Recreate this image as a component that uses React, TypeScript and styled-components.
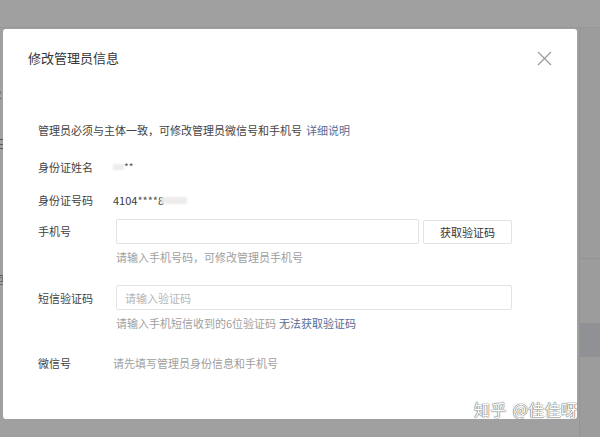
import React from "react";
import styled, { createGlobalStyle } from "styled-components";

const Global = createGlobalStyle`
  html, body { margin: 0; padding: 0; }
  body {
    width: 600px;
    height: 437px;
    overflow: hidden;
    background: #a0a0a0;
    font-family: "Noto Sans CJK SC", "Microsoft YaHei", "Noto Sans", sans-serif;
  }
`;

const Stage = styled.div`
  position: relative;
  width: 600px;
  height: 437px;
  overflow: hidden;
  background: #a0a0a0;
`;

/* ---------- dimmed page behind the dialog ---------- */
const Page = styled.div`
  display: flex;
  flex-direction: column;
  height: 100%;
`;

const TopBar = styled.div`
  height: 27px;
  border-bottom: 1px solid #979797;
  flex-shrink: 0;
`;

const PageBody = styled.div`
  flex: 1;
  display: flex;
`;

const LeftRail = styled.div`
  width: 10px;
  display: flex;
  flex-direction: column;
  color: #3c3c3c;
  font-size: 12px;
  line-height: 14px;
  margin-left: -5px;
`;

const RailGlyph = styled.span<{ $mt: number }>`
  margin-top: ${(p) => p.$mt}px;
  opacity: 0.7;
`;

const PageMain = styled.div`
  flex: 1;
`;

const SidePanel = styled.div`
  width: 20px;
  border-left: 1px solid #959595;
  background: #9c9c9c;
  display: flex;
  flex-direction: column;
`;

const SideRow = styled.div<{ $h: number; $dark?: boolean; $line?: boolean }>`
  height: ${(p) => p.$h}px;
  flex-shrink: 0;
  background: ${(p) => (p.$dark ? "#8f9194" : "transparent")};
  border-bottom: ${(p) => (p.$line ? "1px solid #939393" : "none")};
`;

/* ---------- dialog ---------- */
const Dialog = styled.div`
  position: absolute;
  left: 3px;
  top: 29px;
  width: 574px;
  height: 390px;
  background: #fff;
  border-radius: 3px;
  box-sizing: border-box;
  display: flex;
  flex-direction: column;
`;

const Header = styled.div`
  height: 58px;
  padding: 20px 0 0 25px;
  box-sizing: border-box;
  display: flex;
  align-items: flex-start;
  justify-content: space-between;
`;

const Title = styled.h3`
  margin: 0;
  font-size: 13px;
  line-height: 18px;
  font-weight: 400;
  color: #353535;
`;

const CloseButton = styled.button`
  width: 16px;
  height: 16px;
  margin: 1px 25px 0 0;
  padding: 0;
  border: 0;
  background: transparent;
  display: flex;
  align-items: center;
  justify-content: center;
`;

const Body = styled.div`
  padding: 0 0 0 35px;
  display: flex;
  flex-direction: column;
`;

const Notice = styled.p`
  margin: 35px 0 0;
  font-size: 11px;
  line-height: 16px;
  color: #444;
`;

const Link = styled.a`
  color: #576b95;
  text-decoration: none;
  margin-left: 4px;
`;

const Field = styled.div<{ $mt: number }>`
  margin-top: ${(p) => p.$mt}px;
  display: flex;
  align-items: flex-start;
`;

const Label = styled.label<{ $pt?: number }>`
  width: 78px;
  flex-shrink: 0;
  padding-top: ${(p) => p.$pt ?? 0}px;
  font-size: 11px;
  line-height: 16px;
  color: #3f3f3f;
`;

const Control = styled.div`
  display: flex;
  flex-direction: column;
`;

const Value = styled.div<{ $muted?: boolean }>`
  font-size: 11px;
  line-height: 16px;
  color: ${(p) => (p.$muted ? "#a0a0a0" : "#3a3a3a")};
  display: flex;
  align-items: center;
  margin-left: -3px;
`;

const Stars = styled.span<{ $size: number }>`
  font-size: ${(p) => p.$size}px;
  color: #555;
`;

const Smudge = styled.span<{ $w: number; $h: number; $ml: number }>`
  display: inline-block;
  width: ${(p) => p.$w}px;
  height: ${(p) => p.$h}px;
  margin-left: ${(p) => p.$ml}px;
  background: #ececec;
  filter: blur(1.2px);
`;

const InputRow = styled.div`
  display: flex;
  align-items: center;
  gap: 4px;
`;

const Input = styled.input<{ $w: number }>`
  width: ${(p) => p.$w}px;
  height: 25px;
  box-sizing: border-box;
  border: 1px solid #e3e3e3;
  border-radius: 2px;
  padding: 0 8px;
  font-family: inherit;
  font-size: 11px;
  color: #333;
  outline: none;
  &::placeholder { color: #b5b5b5; }
`;

const CodeButton = styled.button`
  width: 89px;
  height: 24px;
  box-sizing: border-box;
  border: 1px solid #e3e3e3;
  border-radius: 2px;
  background: #fff;
  font-family: inherit;
  font-size: 11px;
  color: #353535;
  padding: 0;
`;

const Help = styled.div`
  margin-top: 5px;
  font-size: 11px;
  line-height: 16px;
  color: #a0a0a0;
`;

const HelpLink = styled.a`
  color: #576b95;
  text-decoration: none;
  margin-left: 3px;
`;

const Watermark = styled.div`
  position: absolute;
  left: 474px;
  top: 399px;
  font-size: 16px;
  line-height: 20px;
  color: #fff;
  letter-spacing: 0.4px;
  word-spacing: 2px;
  text-shadow: 0 0 1px #6d6d6d, 0 0 1px #6d6d6d, 0 0 1px #6d6d6d;
  white-space: nowrap;
`;

const CloseIcon = () => (
  <svg width="15" height="15" viewBox="0 0 15 15">
    <path d="M1 1 L14 14 M14 1 L1 14" stroke="#9a9a9a" strokeWidth="1.2" fill="none" />
  </svg>
);

export default function App() {
  return (
    <>
      <Global />
      <Stage>
        <Page>
          <TopBar />
          <PageBody>
            <LeftRail>
              <RailGlyph $mt={59}>2</RailGlyph>
              <RailGlyph $mt={36}>三</RailGlyph>
              <RailGlyph $mt={122}>回</RailGlyph>
            </LeftRail>
            <PageMain />
            <SidePanel>
              <SideRow $h={230} $line />
              <SideRow $h={64} />
              <SideRow $h={34} $dark />
            </SidePanel>
          </PageBody>
        </Page>

        <Dialog role="dialog">
          <Header>
            <Title>修改管理员信息</Title>
            <CloseButton aria-label="关闭">
              <CloseIcon />
            </CloseButton>
          </Header>
          <Body>
            <Notice>
              管理员必须与主体一致，可修改管理员微信号和手机号
              <Link href="#">详细说明</Link>
            </Notice>

            <Field $mt={21}>
              <Label>身份证姓名</Label>
              <Value>
                <Smudge $w={11} $h={6} $ml={0} />
                <Stars $size={10}>**</Stars>
              </Value>
            </Field>

            <Field $mt={17}>
              <Label>身份证号码</Label>
              <Value>
                4104<Stars $size={11}>****</Stars>8
                <Smudge $w={26} $h={7} $ml={-3} />
              </Value>
            </Field>

            <Field $mt={11}>
              <Label $pt={4}>手机号</Label>
              <Control>
                <InputRow>
                  <Input $w={303} />
                  <CodeButton>获取验证码</CodeButton>
                </InputRow>
                <Help>请输入手机号码，可修改管理员手机号</Help>
              </Control>
            </Field>

            <Field $mt={20}>
              <Label $pt={5}>短信验证码</Label>
              <Control>
                <Input $w={396} placeholder="请输入验证码" />
                <Help>
                  请输入手机短信收到的6位验证码
                  <HelpLink href="#">无法获取验证码</HelpLink>
                </Help>
              </Control>
            </Field>

            <Field $mt={24}>
              <Label>微信号</Label>
              <Value $muted>请先填写管理员身份信息和手机号</Value>
            </Field>
          </Body>
        </Dialog>

        <Watermark>知乎 @佳佳呀</Watermark>
      </Stage>
    </>
  );
}
